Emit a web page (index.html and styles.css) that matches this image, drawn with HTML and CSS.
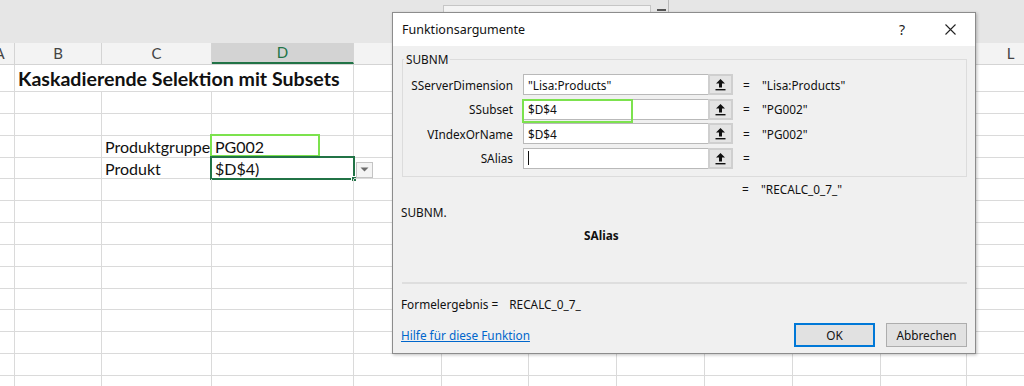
FILE: index.html
```html
<!DOCTYPE html>
<html lang="de">
<head>
<meta charset="utf-8">
<title>Funktionsargumente</title>
<link rel="stylesheet" href="styles.css">
</head>
<body>
<div class="app">
  <div class="topband">
    <div class="fbox"></div>
    <div class="fdash"></div>
    <div class="fsep"></div>
  </div>
  <div class="hdr">
    <div class="h ha">A</div><div class="h">B</div><div class="h">C</div><div class="h hsel">D</div>
    <div class="h">E</div><div class="h">F</div><div class="h">G</div><div class="h">H</div>
    <div class="h">I</div><div class="h">J</div><div class="h">K</div><div class="h">L</div>
  </div>
  <div class="grid">
    <div class="c ca"></div><div class="c title">Kaskadierende Selektion mit Subsets</div><div class="c"></div><div class="c"></div><div class="c"></div><div class="c"></div><div class="c"></div><div class="c"></div><div class="c"></div><div class="c"></div>

    <div class="c ca"></div><div class="c"></div><div class="c"></div><div class="c"></div><div class="c"></div><div class="c"></div><div class="c"></div><div class="c"></div><div class="c"></div><div class="c"></div><div class="c"></div><div class="c"></div>
    <div class="c ca"></div><div class="c"></div><div class="c"></div><div class="c"></div><div class="c"></div><div class="c"></div><div class="c"></div><div class="c"></div><div class="c"></div><div class="c"></div><div class="c"></div><div class="c"></div>

    <div class="c ca"></div><div class="c"></div><div class="c txt">Produktgruppe</div><div class="c txt ref">PG002<span class="refbox"></span></div><div class="c"></div><div class="c"></div><div class="c"></div><div class="c"></div><div class="c"></div><div class="c"></div><div class="c"></div><div class="c"></div>

    <div class="c ca"></div><div class="c"></div><div class="c txt">Produkt</div><div class="c txt sel">$D$4)<span class="selbox"><span class="handle"></span></span></div><div class="c dd"><span class="ddbtn"><svg width="9" height="5" viewBox="0 0 9 5"><path d="M0.5 0.5h8l-4 4z" fill="#6b6b6b"/></svg></span></div><div class="c"></div><div class="c"></div><div class="c"></div><div class="c"></div><div class="c"></div><div class="c"></div><div class="c"></div>

    <div class="c ca"></div><div class="c"></div><div class="c"></div><div class="c"></div><div class="c"></div><div class="c"></div><div class="c"></div><div class="c"></div><div class="c"></div><div class="c"></div><div class="c"></div><div class="c"></div>
    <div class="c ca"></div><div class="c"></div><div class="c"></div><div class="c"></div><div class="c"></div><div class="c"></div><div class="c"></div><div class="c"></div><div class="c"></div><div class="c"></div><div class="c"></div><div class="c"></div>
    <div class="c ca"></div><div class="c"></div><div class="c"></div><div class="c"></div><div class="c"></div><div class="c"></div><div class="c"></div><div class="c"></div><div class="c"></div><div class="c"></div><div class="c"></div><div class="c"></div>
    <div class="c ca"></div><div class="c"></div><div class="c"></div><div class="c"></div><div class="c"></div><div class="c"></div><div class="c"></div><div class="c"></div><div class="c"></div><div class="c"></div><div class="c"></div><div class="c"></div>
    <div class="c ca"></div><div class="c"></div><div class="c"></div><div class="c"></div><div class="c"></div><div class="c"></div><div class="c"></div><div class="c"></div><div class="c"></div><div class="c"></div><div class="c"></div><div class="c"></div>
    <div class="c ca"></div><div class="c"></div><div class="c"></div><div class="c"></div><div class="c"></div><div class="c"></div><div class="c"></div><div class="c"></div><div class="c"></div><div class="c"></div><div class="c"></div><div class="c"></div>
    <div class="c ca"></div><div class="c"></div><div class="c"></div><div class="c"></div><div class="c"></div><div class="c"></div><div class="c"></div><div class="c"></div><div class="c"></div><div class="c"></div><div class="c"></div><div class="c"></div>
    <div class="c ca"></div><div class="c"></div><div class="c"></div><div class="c"></div><div class="c"></div><div class="c"></div><div class="c"></div><div class="c"></div><div class="c"></div><div class="c"></div><div class="c"></div><div class="c"></div>
    <div class="c ca"></div><div class="c"></div><div class="c"></div><div class="c"></div><div class="c"></div><div class="c"></div><div class="c"></div><div class="c"></div><div class="c"></div><div class="c"></div><div class="c"></div><div class="c"></div>
    <div class="c ca"></div><div class="c"></div><div class="c"></div><div class="c"></div><div class="c"></div><div class="c"></div><div class="c"></div><div class="c"></div><div class="c"></div><div class="c"></div><div class="c"></div><div class="c"></div>
  </div>

  <div class="dialog">
    <div class="dtitle">
      <span class="dname">Funktionsargumente</span>
      <span class="dhelp">?</span>
      <span class="dclose"><svg width="11" height="11" viewBox="0 0 11 11"><path d="M0.5 0.5l10 10M10.5 0.5l-10 10" stroke="#222" stroke-width="1.1"/></svg></span>
    </div>
    <div class="dbody">
      <fieldset class="group">
        <legend>SUBNM</legend>
        <div class="args">
          <span class="lbl">SServerDimension</span>
          <span class="inp">"Lisa:Products"</span>
          <span class="pick"><svg width="11" height="13" viewBox="0 0 11 13"><path d="M5.5 1L1 5.5h3v4h3v-4h3z" fill="#111"/><rect x="0.5" y="11" width="10" height="1.4" fill="#111"/></svg></span>
          <span class="eq">=</span>
          <span class="val">"Lisa:Products"</span>

          <span class="lbl">SSubset</span>
          <span class="inp hl">$D$4<span class="hlbox"></span></span>
          <span class="pick"><svg width="11" height="13" viewBox="0 0 11 13"><path d="M5.5 1L1 5.5h3v4h3v-4h3z" fill="#111"/><rect x="0.5" y="11" width="10" height="1.4" fill="#111"/></svg></span>
          <span class="eq">=</span>
          <span class="val">"PG002"</span>

          <span class="lbl">VIndexOrName</span>
          <span class="inp">$D$4</span>
          <span class="pick"><svg width="11" height="13" viewBox="0 0 11 13"><path d="M5.5 1L1 5.5h3v4h3v-4h3z" fill="#111"/><rect x="0.5" y="11" width="10" height="1.4" fill="#111"/></svg></span>
          <span class="eq">=</span>
          <span class="val">"PG002"</span>

          <span class="lbl">SAlias</span>
          <span class="inp"><span class="caret"></span></span>
          <span class="pick"><svg width="11" height="13" viewBox="0 0 11 13"><path d="M5.5 1L1 5.5h3v4h3v-4h3z" fill="#111"/><rect x="0.5" y="11" width="10" height="1.4" fill="#111"/></svg></span>
          <span class="eq">=</span>
          <span class="val"></span>
        </div>
      </fieldset>
      <div class="result"><span class="eq">=</span><span class="val">"RECALC_0_7_"</span></div>
      <div class="fname">SUBNM.</div>
      <div class="argname">SAlias</div>
      <div class="sep"></div>
      <div class="formel">Formelergebnis =<span class="fval">RECALC_0_7_</span></div>
      <div class="footer">
        <a class="help" href="#">Hilfe für diese Funktion</a>
        <div class="btns">
          <button class="btn ok">OK</button>
          <button class="btn">Abbrechen</button>
        </div>
      </div>
    </div>
  </div>
</div>
</body>
</html>
```

FILE: styles.css
```css
* { box-sizing: border-box; }
html, body { margin: 0; padding: 0; }
body {
  width: 1024px;
  height: 386px;
  overflow: hidden;
  background: #ffffff;
  font-family: "Lato", "Liberation Sans", sans-serif;
}
.app {
  position: relative;
  width: 1024px;
  height: 386px;
  overflow: hidden;
}

/* top band */
.topband {
  height: 43px;
  background: #e6e6e6;
  display: flex;
  align-items: flex-start;
}
.fbox {
  margin-left: 443px;
  margin-top: 5px;
  width: 208px;
  height: 20px;
  border: 1px solid #c6c6c6;
  background: #f4f4f4;
}
.fdash {
  margin-left: 6px;
  margin-top: 9px;
  width: 9px;
  height: 2px;
  background: #555;
}
.fsep {
  margin-left: 2px;
  width: 1px;
  height: 14px;
  background: #b8b8b8;
}

/* column headers */
.hdr {
  display: grid;
  grid-template-columns: 30px 87px 110px 142px 88px 87px 88px 88px 88px 88px 86px 88px;
  margin-left: -15px;
  height: 22px;
  background: #f3f3f3;
  border-bottom: 1px solid #d4d4d4;
}
.h {
  border-right: 1px solid #d4d4d4;
  font-size: 15px;
  color: #444;
  display: flex;
  align-items: center;
  justify-content: center;
  line-height: 1;
}
.hsel {
  background: #d3d3d3;
  color: #217346;
  border-bottom: 2px solid #217346;
}

/* cells */
.grid {
  display: grid;
  grid-template-columns: 30px 87px 110px 142px 88px 87px 88px 88px 88px 88px 86px 88px;
  grid-template-rows: 27px;
  grid-auto-rows: 21.85px;
  margin-left: -15px;
}
.c {
  position: relative;
  border-right: 1px solid #dadada;
  border-bottom: 1px solid #dadada;
  font-size: 16px;
  color: #111;
  white-space: nowrap;
}
.title {
  grid-column: span 3;
  font-weight: 700;
  font-size: 19.6px;
  padding-left: 3px;
  display: flex;
  align-items: center;
  padding-top: 1px;
}
.txt {
  padding-left: 3px;
  display: flex;
  align-items: center;
  padding-top: 1px;
}
.refbox {
  position: absolute;
  left: -2px;
  top: -2px;
  width: 110px;
  height: 23px;
  border: 2px solid #7ce24e;
}
.selbox {
  position: absolute;
  left: -2px;
  top: -2px;
  right: -2px;
  bottom: -2px;
  border: 2px solid #217346;
}
.handle {
  position: absolute;
  right: -4px;
  bottom: -4px;
  width: 6px;
  height: 6px;
  background: #217346;
  border: 1px solid #fff;
}
.ddbtn {
  position: absolute;
  left: 2px;
  top: 4px;
  width: 17px;
  height: 16px;
  background: #f4f4f4;
  border: 1px solid #c4c4c4;
  display: flex;
  align-items: center;
  justify-content: center;
}

/* dialog */
.dialog {
  position: absolute;
  left: 392px;
  top: 12px;
  width: 584px;
  height: 342px;
  border: 1px solid #8c8c8c;
  background: #f0f0f0;
  box-shadow: 1px 1px 3px rgba(0,0,0,0.25);
  font-family: "Noto Sans", "Liberation Sans", sans-serif;
  font-size: 11.8px;
  color: #111;
  display: flex;
  flex-direction: column;
}
.dtitle {
  height: 33px;
  background: #ffffff;
  display: flex;
  align-items: center;
  padding-left: 9px;
}
.dname {
  font-size: 12.5px;
  flex: 1;
}
.dhelp {
  font-size: 14px;
  color: #222;
  margin-right: 40px;
}
.dclose {
  display: flex;
  margin-right: 19px;
}
.dbody {
  padding: 0 8px 0 8px;
  display: flex;
  flex-direction: column;
}
.group {
  margin: 6px 0 0 1px;
  padding: 0 0 7px 0;
  border: 1px solid #dcdcdc;
  border-radius: 0;
}
.group legend {
  padding: 0 2px;
  margin-left: 1px;
  line-height: 14px;
}
.args {
  display: grid;
  grid-template-columns: 110px 195px 25px auto 1fr;
  grid-auto-rows: 21px;
  row-gap: 3.5px;
  margin-top: 8px;
  align-items: center;
}
.lbl {
  text-align: right;
}
.inp {
  position: relative;
  margin-left: 10px;
  height: 21px;
  background: #ffffff;
  border: 1px solid #b9b9b9;
  border-right: none;
  padding-left: 4px;
  display: flex;
  align-items: center;
}
.hlbox {
  position: absolute;
  left: -2px;
  top: -1px;
  width: 111px;
  height: 24px;
  border: 2px solid #7ce24e;
}
.caret {
  width: 1px;
  height: 14px;
  background: #111;
}
.pick {
  height: 21px;
  background: #e4e4e4;
  border: 2px solid #cfcfcf;
  display: flex;
  align-items: center;
  justify-content: center;
}
.eq {
  margin-left: 10px;
  width: 7px;
}
.val {
  margin-left: 12px;
}
.result {
  margin-top: 5px;
  padding-left: 331px;
  display: flex;
  line-height: 14px;
}
.fname {
  margin-top: 9px;
  line-height: 14px;
}
.argname {
  margin-top: 9px;
  padding-left: 183px;
  font-weight: 700;
  line-height: 14px;
}
.sep {
  margin-top: 40px;
  margin-left: 1px;
  height: 2px;
  background: #dedede;
}
.formel {
  margin-top: 13px;
  line-height: 14px;
}
.fval {
  margin-left: 11px;
}
.footer {
  margin-top: 12px;
  display: flex;
  align-items: center;
  justify-content: space-between;
}
.help {
  color: #0066cc;
  text-decoration: underline;
}
.btns {
  display: flex;
  gap: 11px;
}
.btn {
  width: 81px;
  height: 24px;
  background: #e1e1e1;
  border: 1px solid #adadad;
  font-family: "Noto Sans", "Liberation Sans", sans-serif;
  font-size: 11.8px;
  color: #111;
  padding: 0;
}
.btn.ok {
  border: 2px solid #0078d7;
}
```
